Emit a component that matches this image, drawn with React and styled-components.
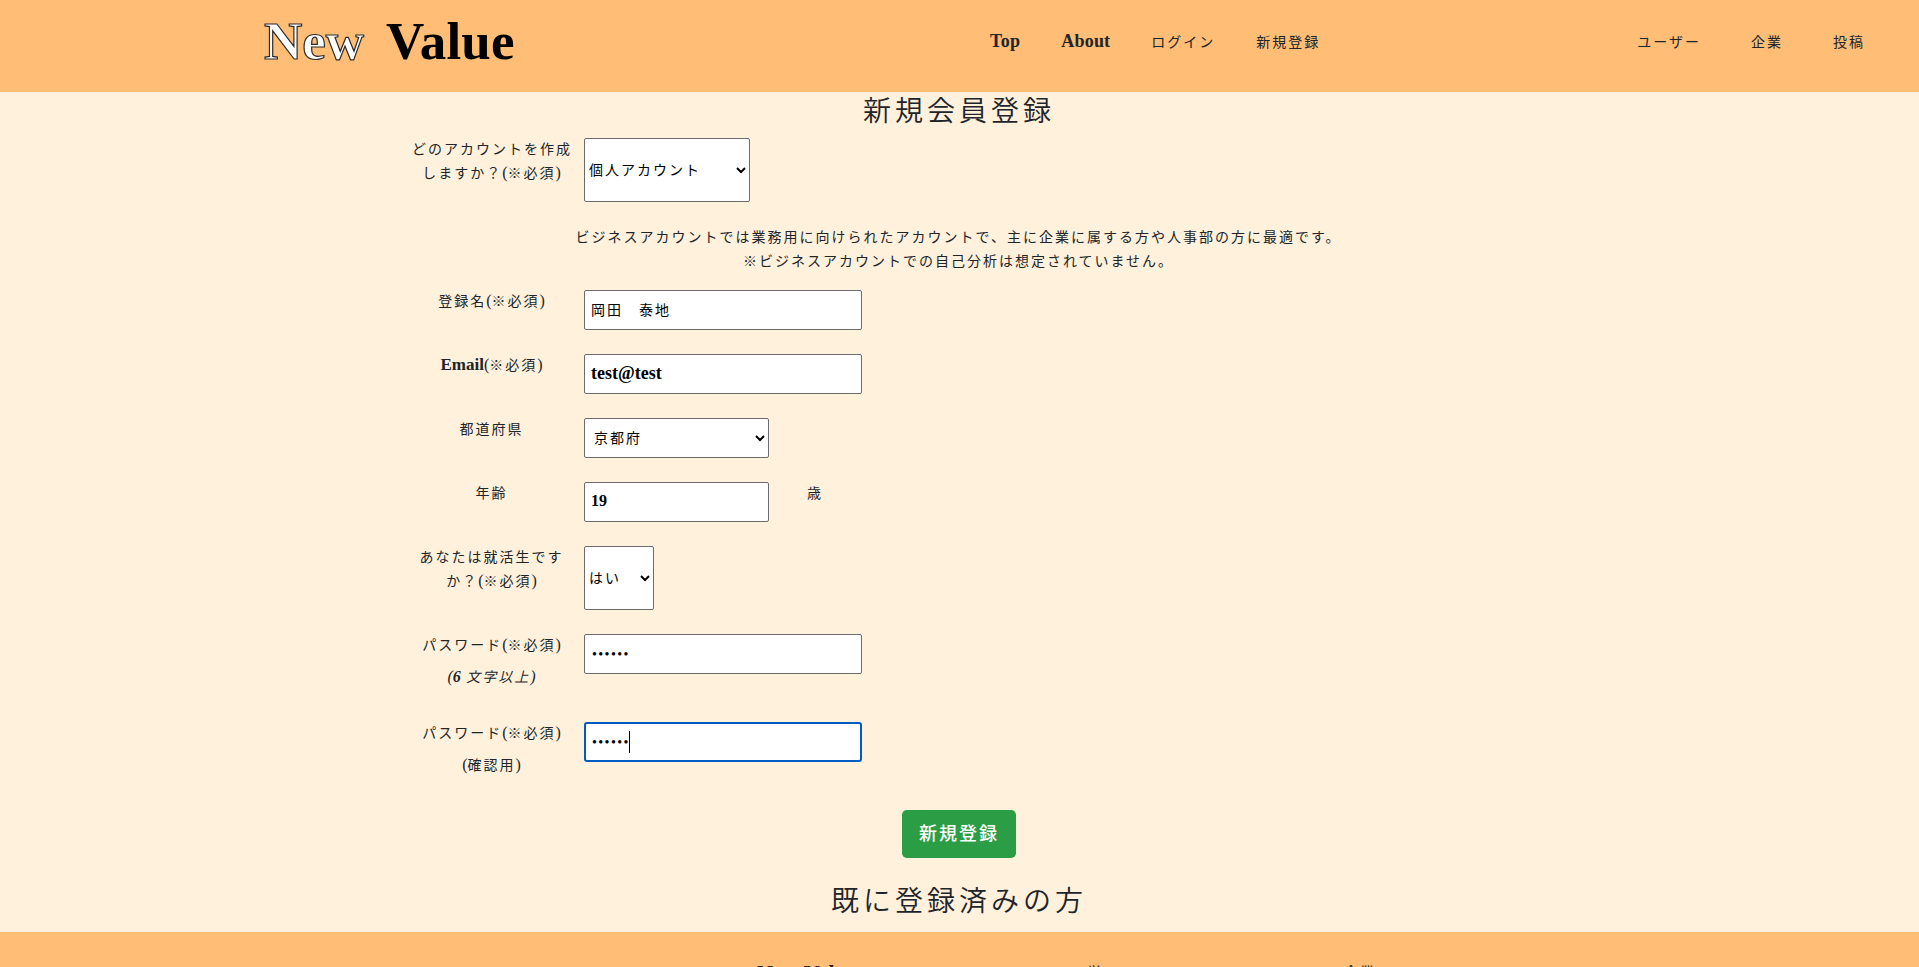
import React from "react";
import styled, { createGlobalStyle, css } from "styled-components";

const Global = createGlobalStyle`
  *, *::before, *::after { box-sizing: border-box; }
  html, body { margin: 0; height: 100%; overflow: hidden; }
  body {
    background: #fff1dc;
    color: #212529;
    font-family: "Liberation Serif", "Noto Sans CJK JP", serif;
    font-size: 14px;
    font-weight: 400;
    line-height: 24px;
    letter-spacing: 2px;
  }
`;

const Page = styled.div`
  height: 967px;
  overflow: hidden;
  display: flex;
  flex-direction: column;
`;

const Header = styled.header`
  flex: none;
  height: 92px;
  padding: 0 52px 0 264px;
  background: #ffbd76;
  display: flex;
  align-items: flex-start;
`;

const Logo = styled.a`
  width: 726px;
  padding-top: 11px;
  display: flex;
  gap: 22px;
  font-size: 53px;
  line-height: 60px;
  font-weight: 700;
  letter-spacing: 0;
  color: #000;
`;

const LogoOutline = styled.span`
  color: #fff;
  -webkit-text-stroke: 1.2px #2b2b2b;
`;

const LogoSolid = styled.span`
  letter-spacing: 0.2px;
`;

const Nav = styled.nav`
  height: 85px;
  display: flex;
  align-items: center;
  gap: ${(p) => p.$gap}px;
  margin-left: ${(p) => p.$offset || 0}px;
`;

const NavLink = styled.a`
  color: #212529;
  white-space: nowrap;
`;

const Latin = styled.span`
  font-size: ${(p) => p.$size || 18}px;
  line-height: 1;
  font-weight: 700;
  letter-spacing: ${(p) => p.$spacing || 0}px;
`;

const Paren = styled.span`
  font-size: 16px;
  line-height: 1;
  letter-spacing: 0;
`;

const Heading = styled.h2`
  margin: 0 1px 8px 0;
  height: 38px;
  padding-top: 2px;
  font-size: 28px;
  line-height: 36px;
  font-weight: 350;
  letter-spacing: 4px;
  text-align: center;
`;

const Form = styled.form`
  display: flex;
  flex-direction: column;
  gap: 24px;
  margin-bottom: 24px;
`;

const Row = styled.div`
  display: flex;
  align-items: flex-start;
  gap: 13px;
  min-height: ${(p) => p.$min || 40}px;
  padding-left: 411px;
`;

const Label = styled.label`
  width: 160px;
  padding-left: 1px;
  text-align: center;
  white-space: nowrap;
`;

const SubLabel = styled.span`
  display: block;
  margin-top: 8px;
  font-style: ${(p) => (p.$italic ? "italic" : "normal")};
`;

const Note = styled.p`
  margin: 0 2px -8px 0;
  text-align: center;
`;

const control = css`
  height: ${(p) => p.$height || 40}px;
  width: ${(p) => p.$width || 278}px;
  border: 1px solid #6b6b6b;
  border-radius: 2px;
  background: #fff;
  color: #000;
  font-family: inherit;
  font-size: 14px;
  font-weight: 400;
  letter-spacing: 2px;
  outline: none;
`;

const Input = styled.input`
  ${control}
  padding: 0 6px 2px;
  ${(p) => p.$latin && css`font-size: ${p.$latin}px; font-weight: 700; letter-spacing: 0;`}
  ${(p) => p.type === "password" && css`font-size: 14px; letter-spacing: 1.4px; padding: 2px 7px 0;`}
  ${(p) => p.$active && css`border: 2px solid #005bc4; padding: 1px 6px 0; border-radius: 3px;`}
`;

const Select = styled.select`
  ${control}
  padding: 0 0 0 ${(p) => p.$pad || 0}px;
`;

const Focused = styled.div`
  position: relative;
`;

const Caret = styled.i`
  position: absolute;
  left: 45px;
  top: 9px;
  width: 1px;
  height: 22px;
  background: #000;
`;

const Unit = styled.span`
  margin-left: 25px;
`;

const Submit = styled.button`
  align-self: center;
  width: 114px;
  height: 48px;
  margin-right: 1px;
  padding: 0 0 4px;
  border: 0;
  border-radius: 4.8px;
  background: #2a9d45;
  color: #fff;
  font-family: inherit;
  font-size: 18px;
  font-weight: 500;
  letter-spacing: 2px;
`;

const Footer = styled.footer`
  flex: none;
  height: 200px;
  margin-top: 4px;
  padding: 28px 0 0 757px;
  background: #ffbd76;
  display: flex;
`;

const FooterColumn = styled.div`
  width: ${(p) => p.$width}px;
  line-height: ${(p) => p.$line || 25}px;
  white-space: nowrap;
`;

const Required = () => (
  <>
    <Paren>(</Paren>※必須<Paren>)</Paren>
  </>
);

export default function App() {
  return (
    <Page>
      <Global />
      <Header>
        <Logo>
          <LogoOutline>New</LogoOutline>
          <LogoSolid>Value</LogoSolid>
        </Logo>
        <Nav $gap={41}>
          <NavLink><Latin $spacing={0.3}>Top</Latin></NavLink>
          <NavLink><Latin $spacing={0.2}>About</Latin></NavLink>
          <NavLink>ログイン</NavLink>
          <NavLink>新規登録</NavLink>
        </Nav>
        <Nav $gap={50} $offset={317}>
          <NavLink>ユーザー</NavLink>
          <NavLink>企業</NavLink>
          <NavLink>投稿</NavLink>
        </Nav>
      </Header>

      <Heading>新規会員登録</Heading>
      <Form>
        <Row $min={64}>
          <Label>
            どのアカウントを作成<br />しますか？<Required />
          </Label>
          <Select $width={166} $height={64}><option>個人アカウント</option></Select>
        </Row>
        <Note>
          ビジネスアカウントでは業務用に向けられたアカウントで、主に企業に属する方や人事部の方に最適です。
          <br />
          ※ビジネスアカウントでの自己分析は想定されていません。
        </Note>
        <Row>
          <Label>登録名<Required /></Label>
          <Input defaultValue="岡田　泰地" />
        </Row>
        <Row>
          <Label><Latin $size={17}>Email</Latin><Required /></Label>
          <Input $latin={18} defaultValue="test@test" />
        </Row>
        <Row>
          <Label>都道府県</Label>
          <Select $width={185} $pad={5}><option>京都府</option></Select>
        </Row>
        <Row>
          <Label>年齢</Label>
          <Input $width={185} $latin={16} defaultValue="19" />
          <Unit>歳</Unit>
        </Row>
        <Row $min={64}>
          <Label>
            あなたは就活生です<br />か？<Required />
          </Label>
          <Select $width={70} $height={64}><option>はい</option></Select>
        </Row>
        <Row $min={64}>
          <Label>
            パスワード<Required />
            <SubLabel $italic><Paren>(</Paren><Latin $size={16}>6</Latin> 文字以上<Paren>)</Paren></SubLabel>
          </Label>
          <Input type="password" defaultValue="secret" />
        </Row>
        <Row $min={64}>
          <Label>
            パスワード<Required />
            <SubLabel><Paren>(</Paren>確認用<Paren>)</Paren></SubLabel>
          </Label>
          <Focused>
            <Input type="password" $active defaultValue="secret" />
            <Caret />
          </Focused>
        </Row>
        <Submit type="button">新規登録</Submit>
      </Form>
      <Heading>既に登録済みの方</Heading>

      <Footer>
        <FooterColumn $width={330} $line={32}><Latin $size={22}>New Value</Latin></FooterColumn>
        <FooterColumn $width={257}>学</FooterColumn>
        <FooterColumn $width={100}>企業</FooterColumn>
      </Footer>
    </Page>
  );
}
